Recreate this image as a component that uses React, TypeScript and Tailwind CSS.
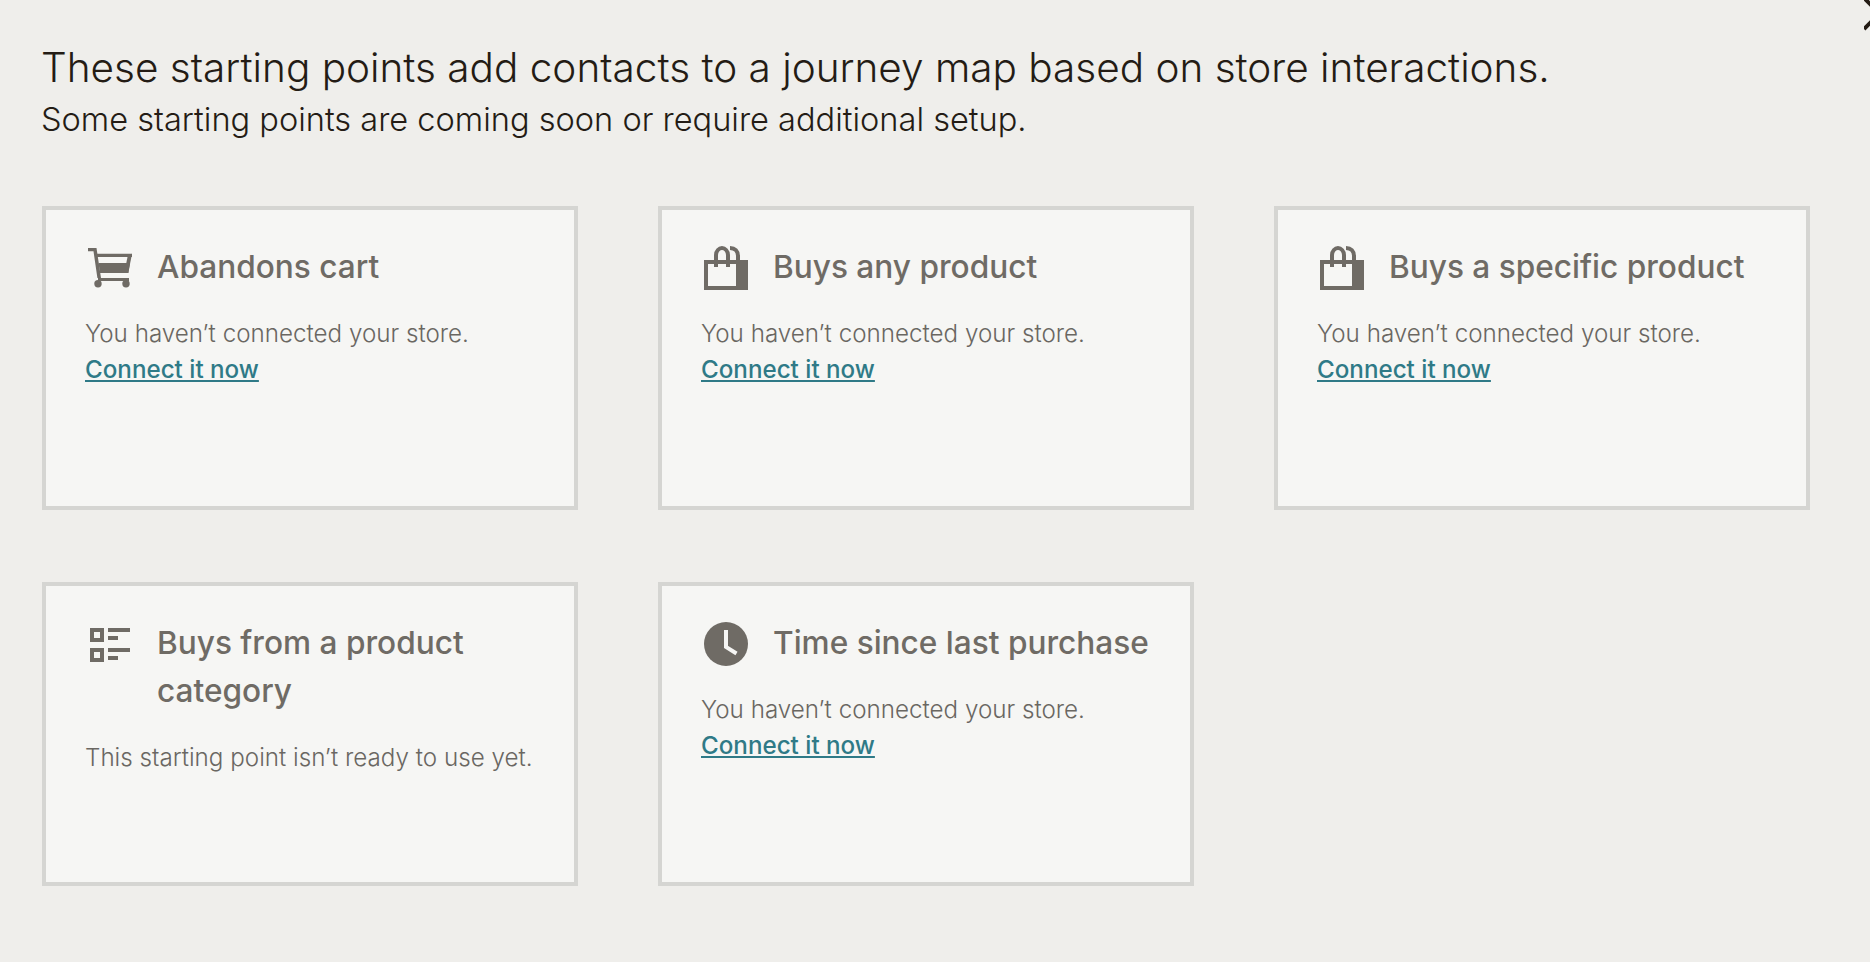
const font = "[font-family:Inter,'Liberation_Sans',sans-serif]";

function Cart() {
  return (
    <svg width="44" height="40" viewBox="0 0 44 40" fill="#6f6b65">
      <path d="M0 0h8.500l4.500 30h-3.600L5.500 3.300H0z" />
      <path d="M9 5.700h35v3.300H9z" />
      <path d="M44 5.700L40.300 25h-4l3.400-17z" />
      <path d="M10.500 15H42l-1.700 10H12z" />
      <path d="M10 30h31v3H10z" />
      <circle cx="10" cy="35.700" r="3.700" />
      <circle cx="38" cy="35.700" r="3.700" />
    </svg>
  );
}

function Bag() {
  return (
    <svg width="44" height="44" viewBox="0 0 44 44" fill="none">
      <path d="M2 16h40v26H2z" stroke="#6f6b65" strokeWidth="4" />
      <path d="M32 14h12v30H32z" fill="#6f6b65" />
      <path d="M12 21V9c0-4 3-7 6-7s6 3 6 7v12" stroke="#6f6b65" strokeWidth="4" />
      <path d="M26 2c5 0 8 3 8 8v4" stroke="#6f6b65" strokeWidth="4" />
    </svg>
  );
}

function ListIcon() {
  return (
    <svg width="40" height="34" viewBox="0 0 40 34" fill="#6f6b65">
      <path fillRule="evenodd" d="M0 0h14v14H0zM4 4v6h6V4z" />
      <path fillRule="evenodd" d="M0 20h14v14H0zM4 24v6h6v-6z" />
      <path d="M18 0h22v4H18zM18 8h10v4H18zM18 20h22v4H18zM18 28h10v4H18z" />
    </svg>
  );
}

function Clock() {
  return (
    <svg width="44" height="44" viewBox="0 0 44 44">
      <circle cx="22" cy="22" r="22" fill="#6f6b65" />
      <path d="M22 8v17l10.500 6.500" fill="none" stroke="#f6f6f4" strokeWidth="4" />
    </svg>
  );
}

function Card({ icon, iconClass, title, ready }: { icon: React.ReactNode; iconClass: string; title: string; ready?: boolean }) {
  return (
    <div className="h-[304px] border-4 border-[#d5d5d2] bg-[#f6f6f4] pl-[39px] pr-8 pt-[33px]">
      <div className="flex items-start">
        <div className={`w-[72px] shrink-0 ${iconClass}`}>{icon}</div>
        <h3 className="text-[31.6px] leading-[48px] font-medium text-[#6f6b65]">{title}</h3>
      </div>
      <div className="mt-[25px] text-[24.2px] leading-[36px] font-light text-[#6a6762]">
        {ready ? (
          <p>This starting point isn’t ready to use yet.</p>
        ) : (
          <>
            <p>You haven’t connected your store.</p>
            <a href="#" className="font-medium text-[#2f7a87] underline">Connect it now</a>
          </>
        )}
      </div>
    </div>
  );
}

export default function App() {
  return (
    <div className={`relative h-[962px] w-[1870px] overflow-hidden bg-[#efeeeb] pl-[42px] pt-[40px] ${font}`}>
      <svg className="absolute left-[1864px] top-0" width="6" height="32" viewBox="0 0 6 32" fill="none">
        <path d="M0 -2l8 8M0 29l8-8" stroke="#241c15" strokeWidth="4" />
      </svg>
      <h1 className="-ml-px text-[40.5px] leading-[56px] font-light text-[#241c15]">These starting points add contacts to a journey map based on store interactions.</h1>
      <p className="-ml-px pt-px text-[32.55px] leading-[44px] font-light text-[#241c15]">Some starting points are coming soon or require additional setup.</p>
      <div className="mt-[65px] grid w-[1768px] grid-cols-3 gap-x-[80px] gap-y-[72px]">
        <Card icon={<Cart />} iconClass="pl-[3px] pt-[5px]" title="Abandons cart" />
        <Card icon={<Bag />} iconClass="pl-[3px] pt-[3px]" title="Buys any product" />
        <Card icon={<Bag />} iconClass="pl-[3px] pt-[3px]" title="Buys a specific product" />
        <Card icon={<ListIcon />} iconClass="pl-[5px] pt-[9px]" title="Buys from a product category" ready />
        <Card icon={<Clock />} iconClass="pl-[3px] pt-[3px]" title="Time since last purchase" />
      </div>
    </div>
  );
}
